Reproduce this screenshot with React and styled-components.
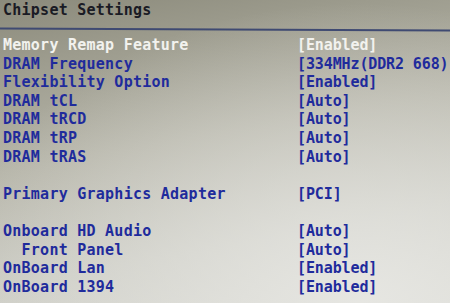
import React from 'react';
import styled, { createGlobalStyle } from 'styled-components';

const GlobalStyle = createGlobalStyle`
  html, body {
    margin: 0;
    padding: 0;
  }
`;

const Screen = styled.div`
  width: 450px;
  height: 303px;
  overflow: hidden;
  box-sizing: border-box;
  padding-left: 3px;
  background:
    radial-gradient(ellipse 420px 300px at 80% 100%, rgba(232, 232, 228, 0.9), rgba(232, 232, 228, 0) 100%),
    linear-gradient(170deg, #8b8a7b 0%, #9d9c8e 18%, #b6b5a9 45%, #cbcbc3 75%, #d6d6d0 100%);
  font-family: 'DejaVu Sans Mono', 'Liberation Mono', monospace;
  font-weight: bold;
  font-size: 15px;
  letter-spacing: 0.25px;
`;

const Title = styled.div`
  height: 27px;
  line-height: 20px;
  color: #1a1b24;
  white-space: nowrap;
`;

const Divider = styled.div`
  margin-left: -3px;
  height: 2px;
  background: #3f4a72;
  transform: translateY(0.5px) rotate(0.25deg);
  transform-origin: left center;
`;

const List = styled.div`
  margin-top: 7px;
  display: grid;
  grid-template-columns: 294px 1fr;
  grid-auto-rows: 18.6px;
  line-height: 18.6px;
`;

const Label = styled.div`
  white-space: pre;
  color: ${({ selected }) => (selected ? '#f2f2ee' : '#1f2b9c')};
`;

const Value = styled.div`
  white-space: pre;
  letter-spacing: -0.12px;
  color: ${({ selected }) => (selected ? '#f2f2ee' : '#1f2b9c')};
`;

const Gap = styled.div`
  grid-column: 1 / -1;
`;

const rows = [
  { label: 'Memory Remap Feature', value: '[Enabled]', selected: true },
  { label: 'DRAM Frequency', value: '[334MHz(DDR2 668)' },
  { label: 'Flexibility Option', value: '[Enabled]' },
  { label: 'DRAM tCL', value: '[Auto]' },
  { label: 'DRAM tRCD', value: '[Auto]' },
  { label: 'DRAM tRP', value: '[Auto]' },
  { label: 'DRAM tRAS', value: '[Auto]' },
  null,
  { label: 'Primary Graphics Adapter', value: '[PCI]' },
  null,
  { label: 'Onboard HD Audio', value: '[Auto]' },
  { label: '  Front Panel', value: '[Auto]' },
  { label: 'OnBoard Lan', value: '[Enabled]' },
  { label: 'OnBoard 1394', value: '[Enabled]' },
];

const App = () => (
  <>
    <GlobalStyle />
    <Screen>
      <Title>Chipset Settings</Title>
      <Divider />
      <List>
        {rows.map((row, i) =>
          row ? (
            <React.Fragment key={row.label}>
              <Label selected={row.selected}>{row.label}</Label>
              <Value selected={row.selected}>{row.value}</Value>
            </React.Fragment>
          ) : (
            <Gap key={`gap-${i}`} />
          ),
        )}
      </List>
    </Screen>
  </>
);

export default App;
